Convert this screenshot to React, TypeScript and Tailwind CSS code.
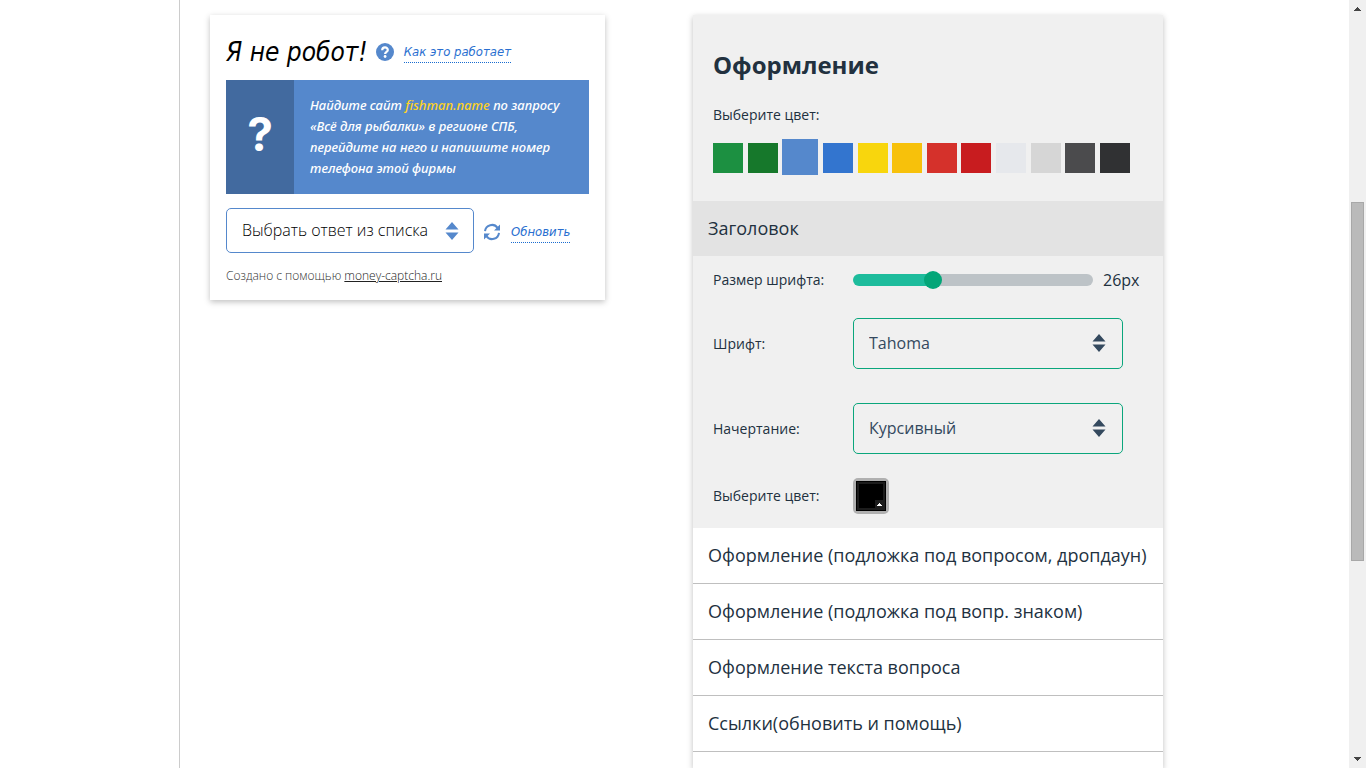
import React, { useState } from 'react';
import clsx from 'clsx';

const THEME_COLORS = [
  '#1c9041',
  '#16782b',
  '#5588cc',
  '#3375cf',
  '#f8d60d',
  '#f7c10b',
  '#d5312b',
  '#c81c1f',
  '#e6e8ec',
  '#d6d6d6',
  '#4b4b4d',
  '#303133',
];

const SECTIONS = [
  'Оформление (подложка под вопросом, дропдаун)',
  'Оформление (подложка под вопр. знаком)',
  'Оформление текста вопроса',
  'Ссылки(обновить и помощь)',
];

const MIN_SIZE = 10;
const MAX_SIZE = 60;

function SortArrows({ className }: { className?: string }) {
  return (
    <svg viewBox="0 0 14 18" className={clsx('pointer-events-none absolute h-[18px] w-[14px]', className)} fill="currentColor" aria-hidden="true">
      <path d="M7 0l6.5 7.5H.5zM7 18l6.5-7.5H.5z" />
    </svg>
  );
}

function HelpIcon() {
  return (
    <svg viewBox="0 0 18 18" className="h-[18px] w-[18px] shrink-0" aria-hidden="true">
      <circle cx="9" cy="9" r="9" fill="#5588cc" />
      <path d="M6.2 7.2C6.2 3.5 11.8 3.6 11.8 6.9C11.8 8.9 9.1 8.7 9.1 10.9" fill="none" stroke="#fff" strokeWidth="2.2" />
      <circle cx="9.1" cy="13.5" r="1.4" fill="#fff" />
    </svg>
  );
}

function RefreshIcon() {
  return (
    <svg viewBox="0 0 18 18" className="h-[18px] w-[18px] shrink-0 text-[#5588cc]" aria-hidden="true">
      <g fill="none" stroke="currentColor" strokeWidth="2">
        <path d="M2 8.2A7 7 0 0 1 14.6 4.8" />
        <path d="M16 9.8A7 7 0 0 1 3.4 13.2" />
      </g>
      <path d="M17 1.6V7.6H11zM1 16.4V10.4H7z" fill="currentColor" />
    </svg>
  );
}

function CaptchaPreview() {
  return (
    <section className="w-[395px] shrink-0 self-start bg-white px-4 pt-5 pb-4 shadow-[0_2px_6px_rgba(0,0,0,0.25)]">
      <div className="mb-[11px] flex h-[34px] items-center font-['DejaVu_Sans_Condensed','Noto_Sans',sans-serif] italic">
        <h2 className="text-[26px] leading-8 whitespace-nowrap text-black">Я не робот!</h2>
        <span className="ml-2 flex items-center gap-[10px]">
          <HelpIcon />
          <a
            href="#how"
            className="border-b border-dotted border-[#1a6dd0] text-[13px] leading-5 whitespace-nowrap text-[#2a6fd0]"
          >
            Как это работает
          </a>
        </span>
      </div>

      <div className="flex h-[114px] bg-[#5588cc]">
        <div className="flex w-[68px] shrink-0 items-center justify-center bg-[#426a9f] pb-[7px] font-['Inter',sans-serif] text-[46px] leading-none font-bold text-white">
          ?
        </div>
        <p className="self-center pl-4 font-['Noto_Sans',sans-serif] text-[13px] leading-[21px] font-medium whitespace-nowrap text-white italic">
          Найдите сайт <span className="text-[#ffd21f]">fishman.name</span> по запросу
          <br />
          «Всё для рыбалки» в регионе СПБ,
          <br />
          перейдите на него и напишите номер
          <br />
          телефона этой фирмы
        </p>
      </div>

      <div className="mt-[14px] flex items-center">
        <div className="relative">
          <select
            aria-label="Ответ"
            className="h-[45px] w-[248px] appearance-none rounded-[5px] border border-[#5588cc] bg-white pb-0.5 pl-[15px] font-['Open_Sans',sans-serif] text-base font-light text-black"
          >
            <option>Выбрать ответ из списка</option>
          </select>
          <SortArrows className="top-[14px] right-[15px] text-[#5588cc]" />
        </div>
        <button type="button" className="ml-[9px] flex items-center gap-[10px] pt-[3px]">
          <RefreshIcon />
          <span className="border-b border-dotted border-[#1a6dd0] font-['DejaVu_Sans_Condensed','Noto_Sans',sans-serif] text-[13px] leading-5 text-[#2a6fd0] italic">
            Обновить
          </span>
        </button>
      </div>

      <p className="mt-[14px] font-['Open_Sans',sans-serif] text-xs leading-[17px] font-light text-[#333]">
        Создано с помощью{' '}
        <a href="#money-captcha" className="text-[#222] underline">
          money-captcha.ru
        </a>
      </p>
    </section>
  );
}

interface SelectRowProps {
  id: string;
  label: string;
  value: string;
  options: string[];
  onChange: (value: string) => void;
}

function SelectRow({ id, label, value, options, onChange }: SelectRowProps) {
  return (
    <div className="flex items-center">
      <label htmlFor={id} className="w-[140px] text-sm">
        {label}
      </label>
      <div className="relative">
        <select
          id={id}
          value={value}
          onChange={(e) => onChange(e.target.value)}
          className="h-[51px] w-[270px] appearance-none rounded-[5px] border border-[#0aa67c] bg-transparent pb-0.5 pl-[15px] text-base text-[#34495e]"
        >
          {options.map((option) => (
            <option key={option}>{option}</option>
          ))}
        </select>
        <SortArrows className="top-4 right-[17px] text-[#34495e]" />
      </div>
    </div>
  );
}

function SettingsPanel() {
  const [theme, setTheme] = useState('#5588cc');
  const [size, setSize] = useState(26);
  const [font, setFont] = useState('Tahoma');
  const [style, setStyle] = useState('Курсивный');

  // the fill ends under the middle of the 18px thumb
  const ratio = (size - MIN_SIZE) / (MAX_SIZE - MIN_SIZE);
  const fill = 9 + ratio * 222;

  return (
    <section className="min-h-full w-[470px] shrink-0 bg-white font-['Open_Sans',sans-serif] text-[#22313f] shadow-[0_2px_6px_rgba(0,0,0,0.25)]">
      <div className="bg-[#f0f0f0] px-5 pt-8 pb-[26px]">
        <h2 className="text-2xl leading-9 font-bold">Оформление</h2>
        <p className="mt-[22px] text-sm">Выберите цвет:</p>
        <div className="mt-[14px] mr-[13px] flex h-9 items-center justify-between">
          {THEME_COLORS.map((color) => (
            <button
              key={color}
              type="button"
              aria-label={color}
              aria-pressed={theme === color}
              onClick={() => setTheme(color)}
              className={theme === color ? 'h-9 w-9' : 'mt-0.5 h-[30px] w-[30px]'}
              style={{ backgroundColor: color }}
            />
          ))}
        </div>
      </div>

      <button type="button" className="block h-[55px] w-full bg-[#e3e3e3] px-[15px] pb-0.5 text-left text-lg">
        Заголовок
      </button>

      <div className="bg-[#f0f0f0] px-5 pb-[14px]">
        <div className="flex h-12 items-center">
          <label htmlFor="size" className="w-[140px] text-sm">
            Размер шрифта:
          </label>
          <input
            id="size"
            type="range"
            min={MIN_SIZE}
            max={MAX_SIZE}
            value={size}
            onChange={(e) => setSize(Number(e.target.value))}
            className="h-3 w-[240px] appearance-none rounded-full [&::-webkit-slider-thumb]:h-[18px] [&::-webkit-slider-thumb]:w-[18px] [&::-webkit-slider-thumb]:appearance-none [&::-webkit-slider-thumb]:rounded-full [&::-webkit-slider-thumb]:bg-[#03a678]"
            style={{ background: `linear-gradient(to right, #1dbc9c ${fill}px, #bdc3c7 ${fill}px)` }}
          />
          <output htmlFor="size" className="ml-[10px] text-base">
            {size}px
          </output>
        </div>

        <div className="mt-[14px] flex flex-col gap-[34px]">
          <SelectRow id="font" label="Шрифт:" value={font} options={['Tahoma', 'Arial', 'Verdana']} onChange={setFont} />
          <SelectRow
            id="style"
            label="Начертание:"
            value={style}
            options={['Обычный', 'Курсивный', 'Жирный']}
            onChange={setStyle}
          />
        </div>

        <div className="mt-6 flex items-center">
          <label htmlFor="title-color" className="w-[140px] text-sm">
            Выберите цвет:
          </label>
          <button id="title-color" type="button" className="h-9 w-9 rounded-[5px] bg-[#b0b0b0] p-[3px]">
            <span className="flex h-full items-end justify-end border border-black bg-black pr-px pb-px outline-2 -outline-offset-3 outline-[#1c1c1c]">
              <svg viewBox="0 0 9 9" className="h-[9px] w-[9px]" aria-hidden="true">
                <path d="M0 0h9v9H0z" fill="#1c1c1c" />
                <path d="M2 6h5v-1h-1v-1h-1v-1h-1v1h-1v1h-1z" fill="#fff" />
              </svg>
            </span>
          </button>
        </div>
      </div>

      {SECTIONS.map((title) => (
        <button
          key={title}
          type="button"
          className="block h-14 w-full border-b border-[#bfbfbf] px-[15px] pb-0.5 text-left text-lg whitespace-nowrap"
        >
          {title}
        </button>
      ))}
    </section>
  );
}

function PageScrollbar() {
  return (
    <div className="flex w-[17px] shrink-0 flex-col items-center bg-[#f0f0f0] py-[7px] text-[#444]" aria-hidden="true">
      <svg viewBox="0 0 7 4" className="h-1 w-[7px]" fill="currentColor">
        <path d="M3 0h1v1h1v1h1v1h1v1H0V3h1V2h1V1h1z" />
      </svg>
      <div className="min-h-0 flex-[192]" />
      <div className="min-h-0 w-[13px] flex-[357] border border-[#a8a8a8] bg-[#bababa]" />
      <div className="min-h-0 flex-[197]" />
      <svg viewBox="0 0 7 4" className="h-1 w-[7px]" fill="currentColor">
        <path d="M3 4h1V3h1V2h1V1h1V0H0v1h1v1h1v1h1z" />
      </svg>
    </div>
  );
}

export default function App() {
  return (
    <div className="flex h-screen overflow-hidden bg-white">
      <main className="min-w-0 flex-1">
        <div className="mx-auto flex h-full max-w-[991px] items-start gap-[88px] border-l border-[#ccc] pt-[15px] pl-[30px]">
          <CaptchaPreview />
          <SettingsPanel />
        </div>
      </main>
      <PageScrollbar />
    </div>
  );
}
